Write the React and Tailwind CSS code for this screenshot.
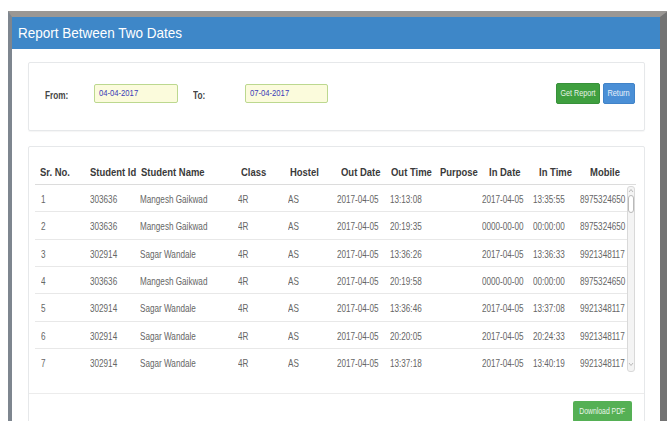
import React from 'react';

const rows = [
  ['1', '303636', 'Mangesh Gaikwad', '4R', 'AS', '2017-04-05', '13:13:08', '', '2017-04-05', '13:35:55', '8975324650'],
  ['2', '303636', 'Mangesh Gaikwad', '4R', 'AS', '2017-04-05', '20:19:35', '', '0000-00-00', '00:00:00', '8975324650'],
  ['3', '302914', 'Sagar Wandale', '4R', 'AS', '2017-04-05', '13:36:26', '', '2017-04-05', '13:36:33', '9921348117'],
  ['4', '303636', 'Mangesh Gaikwad', '4R', 'AS', '2017-04-05', '20:19:58', '', '0000-00-00', '00:00:00', '8975324650'],
  ['5', '302914', 'Sagar Wandale', '4R', 'AS', '2017-04-05', '13:36:46', '', '2017-04-05', '13:37:08', '9921348117'],
  ['6', '302914', 'Sagar Wandale', '4R', 'AS', '2017-04-05', '20:20:05', '', '2017-04-05', '20:24:33', '9921348117'],
  ['7', '302914', 'Sagar Wandale', '4R', 'AS', '2017-04-05', '13:37:18', '', '2017-04-05', '13:40:19', '9921348117'],
];

const headers = ['Sr. No.', 'Student Id', 'Student Name', 'Class', 'Hostel', 'Out Date', 'Out Time', 'Purpose', 'In Date', 'In Time', 'Mobile'];

// narrow glyphs: squeeze text horizontally
function Sq({ className = '', children }) {
  return <span className={`inline-block whitespace-nowrap ${className}`}>{children}</span>;
}

function DateBox({ value, className }) {
  return (
    <div className={`h-[19px] border border-[#bcd88f] bg-[#fbfbdc] rounded-[2px] pl-[4px] flex items-center ${className}`}>
      <Sq className="origin-left scale-x-[.85] text-[9px] text-[#3a3ab8]">{value}</Sq>
    </div>
  );
}

function Scrollbar() {
  return (
    <div className="absolute left-[592px] top-[1px] bottom-[1px] w-[8px] bg-[#f4f4f4] border border-[#d9d9d9] rounded-[3px] flex flex-col items-center">
      <svg width="6" height="5" viewBox="0 0 6 5" className="mt-[1px]">
        <path d="M1 4 L3 1.5 L5 4" fill="none" stroke="#aaa" strokeWidth="0.8" />
      </svg>
      <div className="mt-[2px] w-[6px] h-[18px] bg-white border border-[#b9b9b9] rounded-full" />
      <div className="flex-1" />
      <svg width="6" height="5" viewBox="0 0 6 5" className="mb-[4px]">
        <path d="M1 1 L3 3.5 L5 1" fill="none" stroke="#aaa" strokeWidth="0.8" />
      </svg>
    </div>
  );
}

export default function App() {
  return (
    <div className="w-[667px] h-[421px] overflow-hidden bg-white font-['Liberation_Sans',Arial,sans-serif]">
      {/* caption line of the page above; only its descenders reach this strip */}
      <div className="h-[11px] overflow-hidden">
        <div className="-mt-[26px] pl-[100px] leading-[24px] text-[24px] font-bold text-black font-['Liberation_Serif','Times_New_Roman',serif] whitespace-nowrap">
          Working of Hostel Report
        </div>
      </div>

      <div className="ml-[8px] w-[660px] border-l-4 border-l-[#7e868f] border-t-[6px] border-t-[#9a9794] border-r-[8px] border-r-[#737373] h-[420px] bg-white">
        <div className="h-[32px] bg-[#3e87c8] pl-[6px] flex items-center">
          <Sq className="origin-left scale-x-[.9] text-[15px] text-white">Report Between Two Dates</Sq>
        </div>

        <div className="pt-[13px] pl-[16px]">
          {/* date filter */}
          <div className="w-[617px] h-[69px] border border-[#e6e8ea] rounded-[2px] shadow-[0_1px_1px_rgba(0,0,0,0.04)] pt-[20px] pl-[16px] pr-[9px]">
            <div className="h-[21px] flex items-center">
              <div className="w-[49px]">
                <Sq className="origin-left scale-x-[.82] text-[10px] font-bold text-[#444]">From:</Sq>
              </div>
              <DateBox value="04-04-2017" className="w-[84px]" />
              <div className="w-[15px]" />
              <div className="w-[52px]">
                <Sq className="origin-left scale-x-[.82] text-[10px] font-bold text-[#444]">To:</Sq>
              </div>
              <DateBox value="07-04-2017" className="w-[83px]" />
              <div className="flex-1" />
              <div className="flex gap-[3px]">
                <div className="w-[44px] h-[21px] bg-[#3f9f3f] border border-[#37913a] rounded-[2px] flex items-center justify-center">
                  <Sq className="scale-x-[.8] text-[9px] text-[#e6f3e6]">Get Report</Sq>
                </div>
                <div className="w-[32px] h-[21px] bg-[#4a8fd6] border border-[#4183c8] rounded-[2px] flex items-center justify-center">
                  <Sq className="scale-x-[.82] text-[9px] text-[#e8f1fb]">Return</Sq>
                </div>
              </div>
            </div>
          </div>

          {/* results */}
          <div className="mt-[15px] w-[617px] h-[300px] border border-[#e6e8ea] rounded-[2px]">
            <div className="pt-[11px] pl-[6px]">
              <div className="w-[601px] h-[27px] border-b border-[#dcdcdc] pl-[5px] grid grid-cols-[50px_51px_100px_49px_51px_50px_49px_49px_50px_51px_1fr] items-center">
                {headers.map((h) => (
                  <div key={h}>
                    <Sq className="origin-left scale-x-[.86] text-[11px] font-bold text-[#3a3a3a]">{h}</Sq>
                  </div>
                ))}
              </div>

              <div className="relative w-[601px] h-[188px] overflow-hidden">
                {rows.map((r) => (
                  <div
                    key={r[0]}
                    className="w-[592px] h-[27.33px] border-b border-[#e8e8e8] pl-[6px] grid grid-cols-[49px_50px_98px_50px_49px_53px_47px_45px_51px_47px_1fr] items-center"
                  >
                    {r.map((c, i) => (
                      <div key={i}>
                        <Sq className="origin-left scale-x-[.74] text-[11px] text-[#666]">{c}</Sq>
                      </div>
                    ))}
                  </div>
                ))}
                <Scrollbar />
              </div>
            </div>

            <div className="mt-[20px] border-t border-[#ececec] pt-[7px] pr-[12px] flex justify-end">
              <div className="w-[59px] h-[21px] bg-[#55b055] rounded-[2px] flex items-center justify-center">
                <Sq className="scale-x-[.76] text-[9px] text-[#e8f5e8]">Download PDF</Sq>
              </div>
            </div>
          </div>
        </div>
      </div>
    </div>
  );
}
